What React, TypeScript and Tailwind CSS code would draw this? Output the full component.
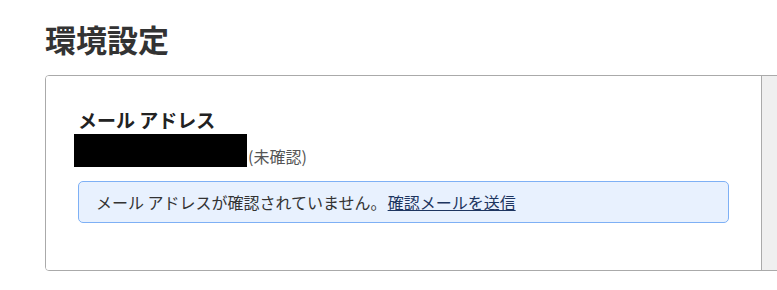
import React from "react";

export default function App() {
  return (
    <div
      className="w-[777px] h-[290px] overflow-hidden bg-white text-[#333]"
      style={{ fontFamily: '"Noto Sans CJK JP", "Noto Sans", sans-serif' }}
    >
      <div className="pl-[45px] pt-[19px]">
        <h1 className="text-[31px] font-bold leading-[40px] text-[#333]">環境設定</h1>
        <div className="mt-[16px] flex w-[1100px] border border-[#aaaaaa] rounded-[4px] overflow-hidden">
          <div className="w-[716px] shrink-0 border-r border-[#aaaaaa] bg-white px-[32px] pt-[30px] pb-[47px]">
            <div className="text-[19px] font-bold leading-[28px] text-[#222]">メール アドレス</div>
            <div className="flex items-end">
              <span className="inline-block -ml-[4px] w-[173px] h-[33px] bg-black" />
              <span className="text-[16px] leading-[22px] text-[#555] pl-[1px]">(未確認)</span>
            </div>
            <div className="mt-[14px] h-[42px] flex items-center border border-[#7eb0f5] bg-[#e8f1fe] rounded-[5px] px-[17px] text-[16px] text-[#333]">
              <span>メール アドレスが確認されていません。</span>
              <a href="#" className="ml-[1px] underline text-[#1d3560]">確認メールを送信</a>
            </div>
          </div>
          <div className="flex-1 bg-[#efefef]" />
        </div>
      </div>
    </div>
  );
}
